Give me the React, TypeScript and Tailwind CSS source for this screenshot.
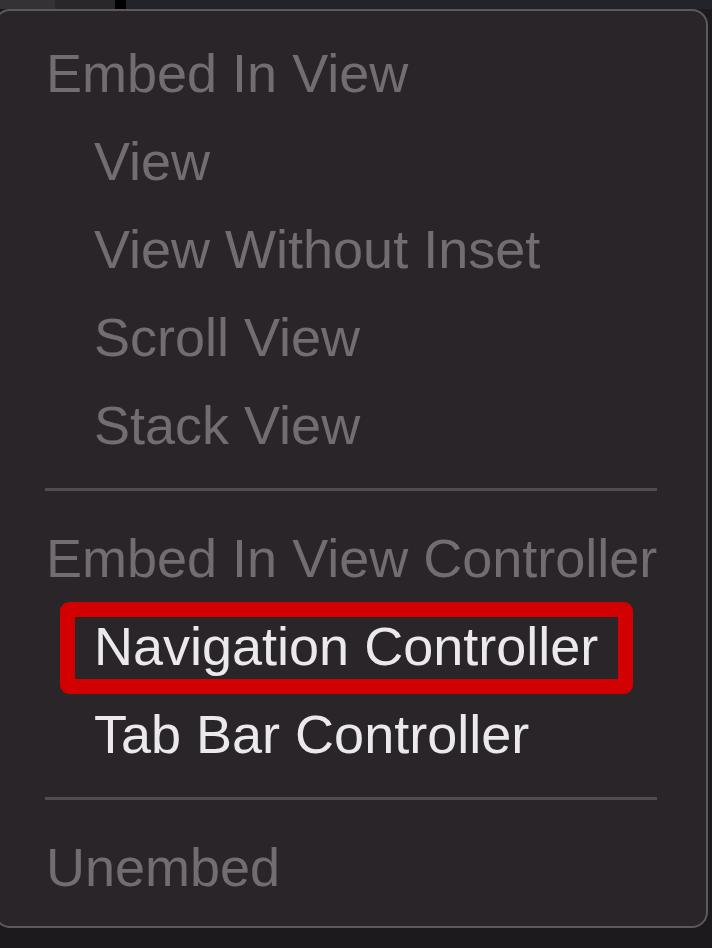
import React from "react";

type Item = { label: string; kind: "head" | "item" | "active" };

const groups: Item[][] = [
  [
    { label: "Embed In View", kind: "head" },
    { label: "View", kind: "item" },
    { label: "View Without Inset", kind: "item" },
    { label: "Scroll View", kind: "item" },
    { label: "Stack View", kind: "item" },
  ],
  [
    { label: "Embed In View Controller", kind: "head" },
    { label: "Navigation Controller", kind: "active" },
    { label: "Tab Bar Controller", kind: "active" },
  ],
  [{ label: "Unembed", kind: "head" }],
];

const MenuRow = ({ item }: { item: Item }) => {
  const color = item.kind === "active" ? "text-[#ebe9eb]" : "text-[#726d72]";
  const indent = item.kind === "head" ? "pl-[50px]" : "pl-[98px]";
  return (
    <div className={`h-[88px] leading-[88px] text-[54px] whitespace-nowrap ${indent} ${color}`}>
      {item.label}
    </div>
  );
};

export default function App() {
  return (
    <div className="relative w-[712px] h-[948px] overflow-hidden bg-[#1d1a1d] font-['Liberation_Sans',Arial,sans-serif]">
      {/* window strip above the menu */}
      <div className="flex h-[9px]">
        <div className="w-[55px] bg-[#343235]" />
        <div className="w-[60px] bg-[#29272a]" />
        <div className="w-[11px] bg-black" />
        <div className="flex-1 bg-[#23242a]" />
      </div>

      <div className="ml-[-6px] w-[714px] rounded-[16px] border-2 border-[#5c585c] bg-[#2a2528] pt-[18px] pb-[15px]">
        {groups.map((group, gi) => (
          <div key={gi}>
            {gi > 0 && <div className="mx-[49px] mt-[19px] mb-[23px] h-[3px] bg-[#514d51]" />}
            {group.map((item) => (
              <MenuRow key={item.label} item={item} />
            ))}
          </div>
        ))}
      </div>

      {/* highlight annotation */}
      <div className="absolute left-[60px] top-[602px] w-[573px] h-[92px] rounded-[9px] border-[15px] border-[#d20000]" />
    </div>
  );
}
